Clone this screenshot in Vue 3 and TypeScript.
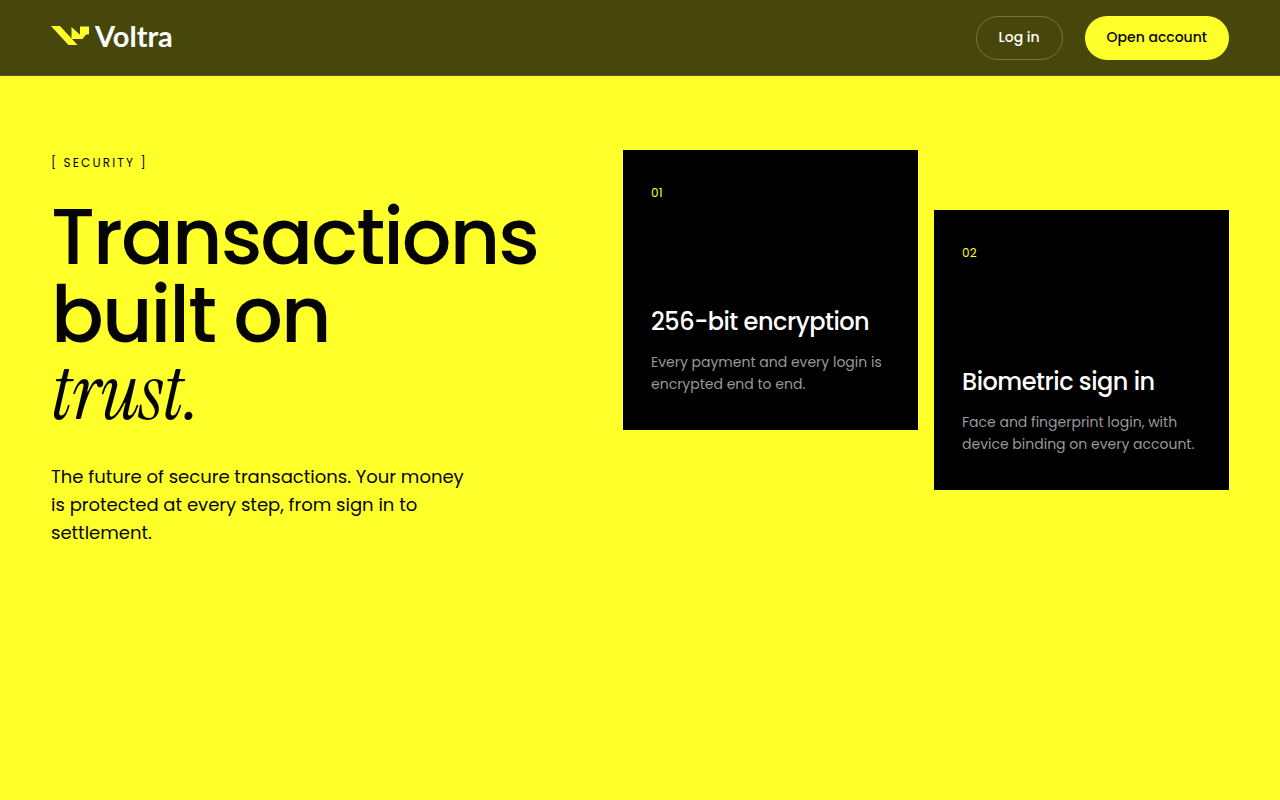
<script setup lang="ts">
interface Feature {
  id: string
  title: string
  text: string
}

const features: Feature[] = [
  { id: '01', title: '256-bit encryption', text: 'Every payment and every login is encrypted end to end.' },
  { id: '02', title: 'Biometric sign in', text: 'Face and fingerprint login, with device binding on every account.' },
]
</script>

<template>
  <div class="page">
    <header class="bar">
      <a class="brand" href="#" aria-label="Voltra">
        <svg class="mark" viewBox="0 0 38 20" aria-hidden="true">
          <path d="M0 0H9L26.500 19H17.500Z" />
          <path d="M20.500 1L29 8.800V0.500H38V8.500H35L31.500 13H20.500Z" />
        </svg>
        <span class="word">Voltra</span>
      </a>
      <nav class="actions">
        <a class="pill ghost" href="#">Log in</a>
        <a class="pill solid" href="#">Open account</a>
      </nav>
    </header>

    <main class="security">
      <section class="intro">
        <p class="eyebrow">[ Security ]</p>
        <h1>Transactions built on <em>trust.</em></h1>
        <p class="lead">
          The future of secure transactions. Your money is protected at every step, from sign in to settlement.
        </p>
      </section>
      <section class="cards">
        <article v-for="feature in features" :key="feature.id" class="card">
          <span class="number">{{ feature.id }}</span>
          <div>
            <h2>{{ feature.title }}</h2>
            <p>{{ feature.text }}</p>
          </div>
        </article>
      </section>
    </main>
  </div>
</template>

<style>
body {
  background: #ffff29;
}
</style>

<style scoped>
.page {
  min-height: 100vh;
  background: #ffff29;
  color: #050505;
  font-family: Poppins, Inter, "Liberation Sans", sans-serif;
}

.bar {
  display: flex;
  align-items: flex-start;
  justify-content: space-between;
  padding: 16px 51px 15px;
  background: #47470b;
  border-bottom: 1px solid #59591f;
}

.brand {
  display: flex;
  align-items: center;
  gap: 6px;
  height: 40px;
  text-decoration: none;
}

.mark {
  width: 38px;
  height: 20px;
  fill: #ffff29;
}

.word {
  color: #fff;
  font-family: Lato, sans-serif;
  font-size: 29px;
  font-weight: 700;
  line-height: 40px;
}

.actions {
  display: flex;
  gap: 22px;
}

.pill {
  box-sizing: border-box;
  height: 44px;
  padding: 0 22px;
  border-radius: 22px;
  font-size: 14px;
  font-weight: 500;
  line-height: 42px;
  text-decoration: none;
}

.ghost {
  border: 1px solid #75753d;
  color: #fff;
  line-height: 40px;
}

.solid {
  background: #ffff29;
  color: #050505;
}

.security {
  display: grid;
  grid-template-columns: minmax(0, 5fr) minmax(0, 6fr);
  gap: 67px;
  padding: 74px 51px;
}

.eyebrow {
  margin: 4px 0 26px;
  font-size: 12px;
  line-height: 18px;
  letter-spacing: 0.18em;
  text-transform: uppercase;
}

h1 {
  margin: 0;
  font-size: 78px;
  font-weight: 500;
  line-height: 78px;
  letter-spacing: -0.025em;
}

h1 em {
  display: block;
  font-family: "Instrument Serif", "Liberation Serif", serif;
  font-weight: 400;
  letter-spacing: -0.005em;
}

.lead {
  max-width: 430px;
  margin: 31px 0 0;
  font-size: 18px;
  line-height: 28px;
}

.cards {
  display: grid;
  grid-template-columns: 1fr 1fr;
  align-items: start;
  gap: 16px;
}

.card {
  display: flex;
  flex-direction: column;
  justify-content: space-between;
  box-sizing: border-box;
  min-height: 280px;
  padding: 34px 28px 35px;
  background: #000;
}

.card:nth-child(even) {
  margin-top: 60px;
}

.number {
  color: #ffff29;
  font-size: 12px;
  line-height: 18px;
  letter-spacing: 0.02em;
}

h2 {
  margin: 0 0 14px;
  color: #fff;
  font-size: 24px;
  font-weight: 500;
  line-height: 30px;
  letter-spacing: -0.02em;
}

.card p {
  margin: 0;
  color: #999;
  font-size: 14px;
  line-height: 22px;
}
</style>
